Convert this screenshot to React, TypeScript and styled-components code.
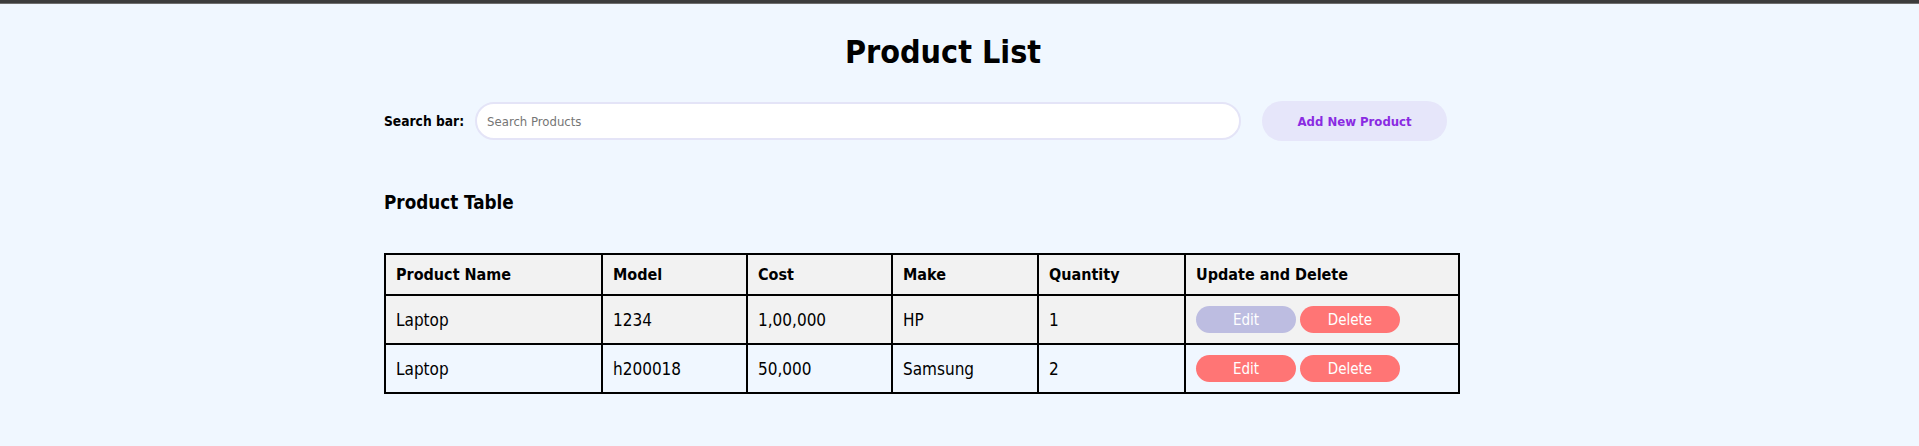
import React from "react";
import styled, { createGlobalStyle } from "styled-components";

const Global = createGlobalStyle`
  html, body {
    margin: 0;
    padding: 0;
    background: #f0f7ff;
    font-family: "DejaVu Sans Condensed", "DejaVu Sans", sans-serif;
    color: #000;
  }
`;

const TopBar = styled.div`
  height: 3px;
  background: #3c3c3c;
  border-bottom: 1px solid #6e6e6e;
`;

const Page = styled.div`
  padding-left: 384px;
  display: flex;
  flex-direction: column;
  align-items: flex-start;
`;

const Title = styled.h1`
  width: 1118px;
  margin: 29px 0 0 0;
  font-size: 32px;
  font-weight: bold;
  text-align: center;
`;

const SearchRow = styled.div`
  margin-top: 30px;
  display: flex;
  align-items: center;
`;

const Label = styled.label`
  font-size: 13.7px;
  font-weight: bold;
  margin-right: 11px;
`;

const SearchInput = styled.input`
  box-sizing: border-box;
  width: 766px;
  height: 38px;
  border: 2px solid #e4e4f7;
  border-radius: 20px;
  background: #fff;
  padding: 0 10px;
  font-family: "DejaVu Sans Condensed", "DejaVu Sans", sans-serif;
  font-size: 13px;
  outline: none;
  &::placeholder {
    color: #757575;
  }
`;

const AddButton = styled.button`
  margin-left: 21px;
  width: 185px;
  height: 40px;
  border: none;
  border-radius: 20px;
  background: #e6e6fa;
  color: #8a2be2;
  font-family: "DejaVu Sans Condensed", "DejaVu Sans", sans-serif;
  font-size: 13px;
  font-weight: bold;
`;

const SubTitle = styled.h3`
  margin: 51px 0 0 0;
  font-size: 18.72px;
  font-weight: bold;
`;

const Table = styled.table`
  margin-top: 40px;
  border-collapse: collapse;
  table-layout: fixed;
  width: 1074px;
`;

const Th = styled.th`
  border: 2px solid #000;
  padding: 10px;
  text-align: left;
  font-size: 16px;
  font-weight: bold;
`;

const Tr = styled.tr<{ $shaded: boolean }>`
  background: ${(p) => (p.$shaded ? "#f2f2f2" : "transparent")};
`;

const Td = styled.td`
  border: 2px solid #000;
  padding: 10px;
  text-align: left;
  font-size: 17px;
`;

const Actions = styled.div`
  display: flex;
  gap: 4px;
  height: 27px;
`;

const ActionButton = styled.button<{ $color: string }>`
  width: 100px;
  height: 27px;
  border: none;
  border-radius: 14px;
  background: ${(p) => p.$color};
  color: #fff;
  font-family: "DejaVu Sans Condensed", "DejaVu Sans", sans-serif;
  font-size: 15px;
  padding: 0;
`;

const products = [
  { name: "Laptop", model: "1234", cost: "1,00,000", make: "HP", qty: "1", editColor: "#bdbde1" },
  { name: "Laptop", model: "h200018", cost: "50,000", make: "Samsung", qty: "2", editColor: "#ff7575" },
];

const widths = [217, 145, 145, 146, 147, 274];

export default function App() {
  return (
    <>
      <Global />
      <TopBar />
      <Page>
        <Title>Product List</Title>
        <SearchRow>
          <Label>Search bar:</Label>
          <SearchInput placeholder="Search Products" />
          <AddButton>Add New Product</AddButton>
        </SearchRow>
        <SubTitle>Product Table</SubTitle>
        <Table>
          <colgroup>
            {widths.map((w, i) => (
              <col key={i} style={{ width: w }} />
            ))}
          </colgroup>
          <thead>
            <Tr $shaded>
              <Th>Product Name</Th>
              <Th>Model</Th>
              <Th>Cost</Th>
              <Th>Make</Th>
              <Th>Quantity</Th>
              <Th>Update and Delete</Th>
            </Tr>
          </thead>
          <tbody>
            {products.map((p, i) => (
              <Tr key={i} $shaded={i % 2 === 0}>
                <Td>{p.name}</Td>
                <Td>{p.model}</Td>
                <Td>{p.cost}</Td>
                <Td>{p.make}</Td>
                <Td>{p.qty}</Td>
                <Td>
                  <Actions>
                    <ActionButton $color={p.editColor}>Edit</ActionButton>
                    <ActionButton $color="#ff7575">Delete</ActionButton>
                  </Actions>
                </Td>
              </Tr>
            ))}
          </tbody>
        </Table>
      </Page>
    </>
  );
}
